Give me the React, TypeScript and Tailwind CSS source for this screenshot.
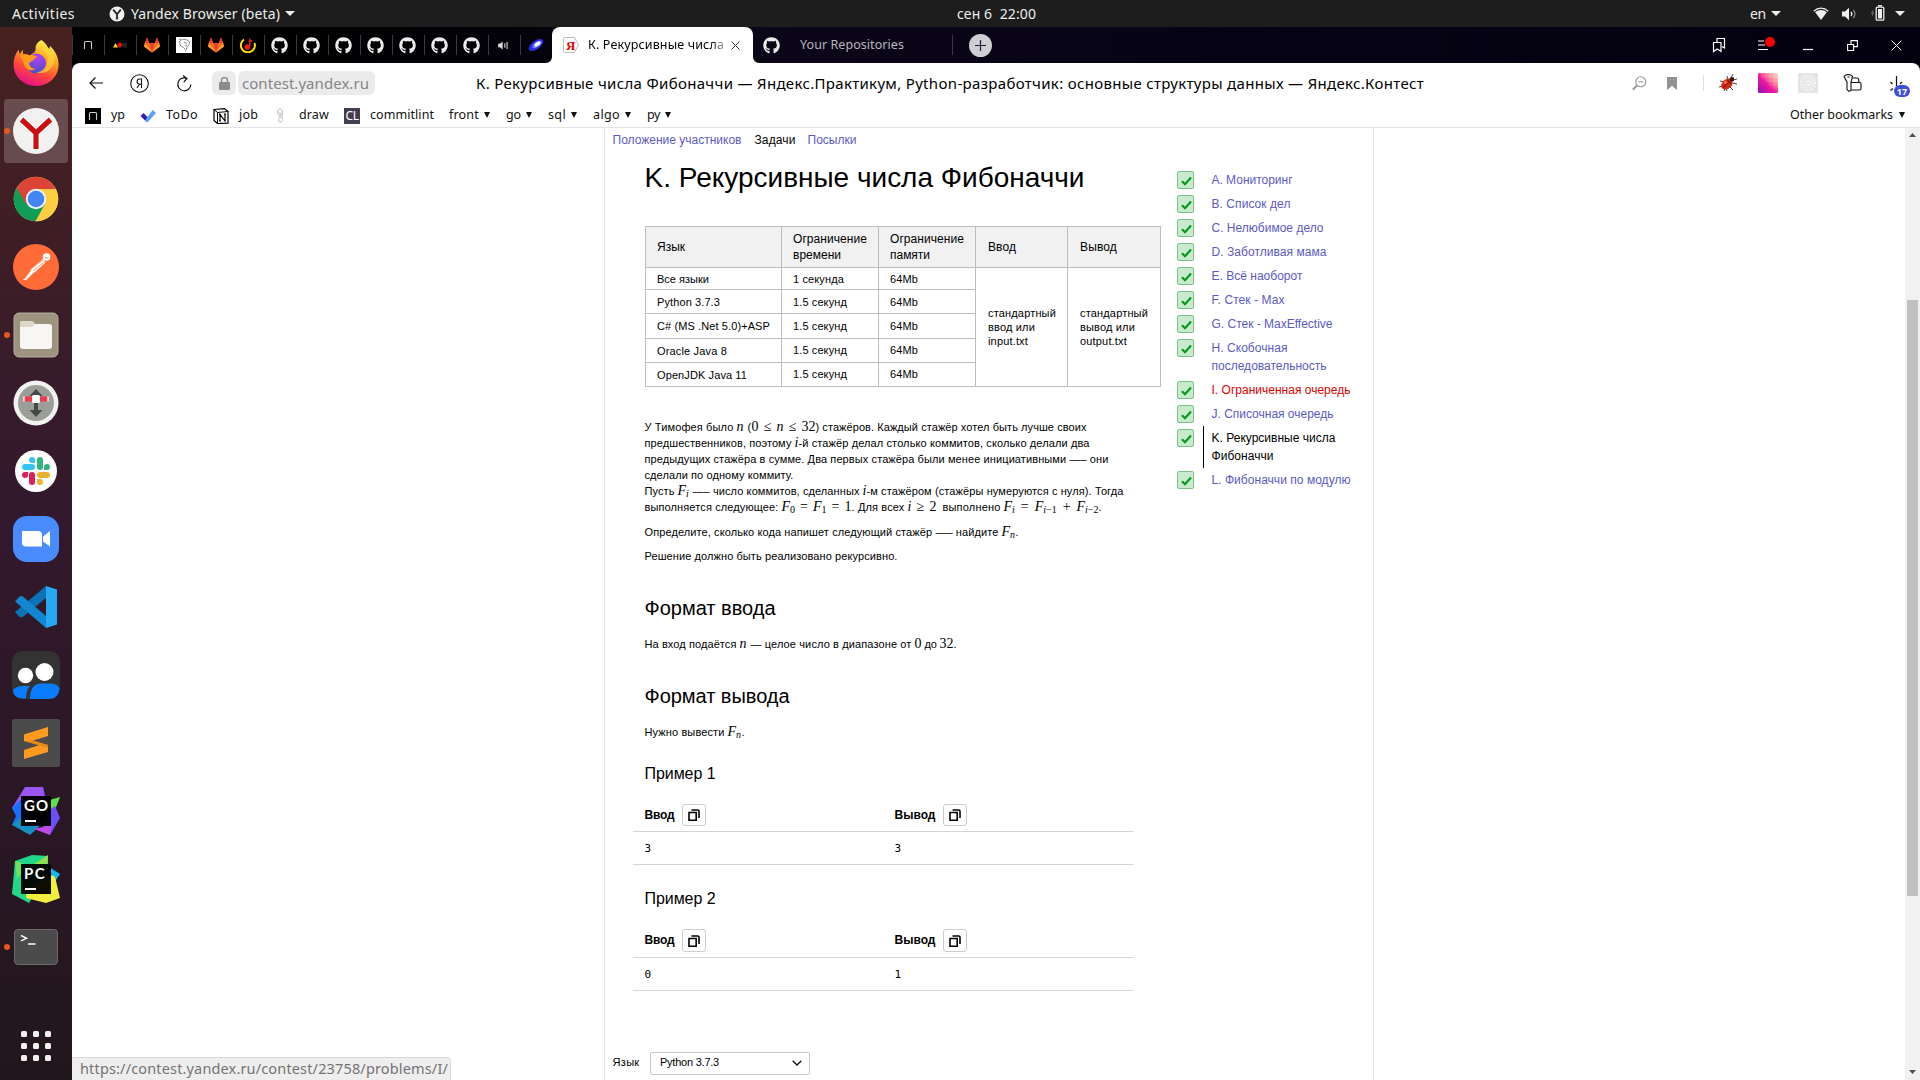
import React, { useLayoutEffect, useRef, useState } from "react";
import { FaGithub } from "react-icons/fa";

/* Text run whose letter (or word) spacing is adjusted so that it spans a given width. */
function Fit({ w, words = false, className = "", children }: { w: number; words?: boolean; className?: string; children: React.ReactNode }) {
  const ref = useRef<HTMLSpanElement>(null);
  const [spacing, setSpacing] = useState(0);
  useLayoutEffect(() => {
    const el = ref.current;
    if (!el) return;
    const text = el.textContent || "";
    const n = words ? text.split(" ").length - 1 : text.length > 1 ? text.length : 0;
    if (n > 0) setSpacing((w - el.getBoundingClientRect().width) / n);
  }, [w, words]);
  return (
    <span className={`inline-block shrink-0 whitespace-pre ${className}`} style={{ width: w }}>
      <span ref={ref} className="inline-block" style={words ? { wordSpacing: spacing } : { letterSpacing: spacing }}>
        {children}
      </span>
    </span>
  );
}

function Caret({ className = "" }: { className?: string }) {
  return (
    <svg className={`shrink-0 ${className}`} viewBox="0 0 10 6" preserveAspectRatio="none" fill="currentColor">
      <path d="M0 0h10L5 6z" />
    </svg>
  );
}

/* ---------- system bar ---------- */

function SystemBar() {
  return (
    <header className="relative flex h-[27px] shrink-0 items-center bg-[#1d1d1d] font-['Noto_Sans',sans-serif] text-[14px] leading-none text-[#eeeeec]">
      <Fit w={63} className="ml-3">Activities</Fit>
      <svg className="ml-[34px] size-[16px]" viewBox="0 0 16 16">
        <circle cx="8" cy="8" r="7.5" fill="#f2f2f2" />
        <path d="M4.2 3.6 8 8.2l3.8-4.6M8 8v5.6" stroke="#222" strokeWidth="1.8" fill="none" />
      </svg>
      <Fit w={149} className="ml-[6px]">Yandex Browser (beta)</Fit>
      <Caret className="ml-[5px] h-[5px] w-[10px]" />
      <div className="absolute left-[957px] top-0 flex h-full items-center">
        <Fit w={79}>сен 6  22:00</Fit>
      </div>
      <div className="ml-auto flex items-center pr-[15px]">
        <Fit w={16}>en</Fit>
        <Caret className="ml-[5px] h-[5px] w-[10px]" />
        <svg className="ml-[32px] h-[14px] w-[16px]" viewBox="0 0 16 14" fill="none">
          <path d="M.8 4.2C5 .2 11 .2 15.2 4.2" stroke="#eee" strokeWidth="1.2" />
          <path d="M2.2 5.2c3.5-2.8 8.1-2.8 11.6 0L8 13z" fill="#eee" />
        </svg>
        <svg className="ml-[13px] h-[14px] w-[15px]" viewBox="0 0 15 14" fill="none">
          <path d="M0 4.5h3L7 .8v12.4L3 9.5H0z" fill="#eee" />
          <path d="M9 5c1 1.200 1 2.800 0 4" stroke="#eee" strokeWidth="1.3" />
          <path d="M11.300 3c2 2.400 2 5.600 0 8" stroke="#888" strokeWidth="1.200" />
        </svg>
        <svg className="ml-[13px] -mt-px h-[16px] w-[15px]" viewBox="0 0 15 16" fill="none">
          <path d="M3.500 4 .8 8.500h1.700L1.500 12.500 4.200 7.500H2.500z" fill="#777" />
          <path d="M8 .8h4" stroke="#eee" strokeWidth="1.500" />
          <rect x="6.200" y="2.200" width="7.600" height="13" rx="1" stroke="#eee" strokeWidth="1.300" />
          <rect x="8" y="4" width="4" height="9.500" fill="#eee" />
        </svg>
        <Caret className="ml-[10px] h-[5px] w-[10px]" />
      </div>
    </header>
  );
}

/* ---------- dock ---------- */

const Firefox = () => (
  <svg viewBox="0 0 48 48" className="size-12">
    <defs>
      <linearGradient id="ff1" x1=".75" y1=".05" x2=".35" y2="1">
        <stop offset="0" stopColor="#fff44f" />
        <stop offset=".35" stopColor="#ffa020" />
        <stop offset=".65" stopColor="#ff4a3a" />
        <stop offset="1" stopColor="#e4108a" />
      </linearGradient>
      <radialGradient id="ff2" cx=".6" cy=".2" r=".8">
        <stop offset="0" stopColor="#b040f5" />
        <stop offset="1" stopColor="#4a4fc4" />
      </radialGradient>
    </defs>
    <path d="M29.500 1c3.500 2.300 5.500 5.500 7.500 9 .8-.8 1-2 .9-3.200C42.500 11 46.600 17.500 46.600 25.500 46.600 38 36.500 47 24 47S1.600 37.500 1.600 25.800c0-7 2.200-12 5.400-15.300-.2 2 .2 3.200.8 4.200L11 10.500v4.300c3 .2 5 .6 7 1.700 3-3.500 6.500-2 5.500-8.500C24.500 4.500 27 2 29.500 1z" fill="url(#ff1)" />
    <circle cx="24" cy="24.500" r="10" fill="url(#ff2)" />
    <path d="M18 16.200c3-.6 6 .2 7.500 1.800-3 .5-3 3.500-6 4.200-2.500.7-3 2.600-1.500 4.800 1 1.600 3 3 6 2.600-4 3.600-11.600 1.400-12.400-5.600L8 16z" fill="#ff9a1c" />
    <path d="M29 3c0 5 5.500 8 6.500 15 1 8-4 15-11.500 15.500 12 3 20-6 18-16C40.500 10 34 8 29 3z" fill="#ffd83a" opacity=".65" />
  </svg>
);

const YandexBrowser = () => (
  <svg viewBox="0 0 48 48" className="size-12">
    <circle cx="24" cy="24" r="23" fill="#f1f1f1" />
    <path d="M9.500 12.500 24 26l14.500-13.500M24 25v18" stroke="#fff" strokeWidth="8" fill="none" />
    <path d="M9.500 12.500 24 26l14.500-13.500M24 25v17" stroke="#cc0f12" strokeWidth="5.200" fill="none" />
  </svg>
);

const Chrome = () => (
  <svg viewBox="0 0 48 48" className="size-12">
    <circle cx="24" cy="24" r="22.300" fill="#fcd040" />
    <path d="M24 24 4.700 12.850A22.300 22.300 0 0 0 24 46.300L34 29z" fill="#0f9d58" />
    <path d="M4.700 12.850A22.300 22.300 0 0 1 43.800 14H24l-9.500 16z" fill="#db4437" />
    <path d="M24 14h19.800A22.300 22.300 0 0 1 23.500 46.300L33 29z" fill="#ffcd40" />
    <circle cx="24" cy="24" r="10.200" fill="#f1f1f1" />
    <circle cx="24" cy="24" r="8.300" fill="#4285f4" />
  </svg>
);

const Postman = () => (
  <svg viewBox="0 0 48 48" className="size-12">
    <circle cx="24" cy="24" r="23" fill="#ff6c37" />
    <circle cx="34.500" cy="14" r="3.800" fill="#fff" />
    <path d="M31.500 15.500 20 25l-1.500 2 4 2.500 11-10z" fill="#fff" />
    <path d="M19.500 26.500 13 35.500l-2.500 1.600 4-.3 8.500-8.300z" fill="#fff" />
    <path d="m19 26 12-9M21 28l12-9.500" stroke="#ff6c37" strokeWidth=".7" />
    <path d="m33 14.500 3.500.5" stroke="#ff6c37" strokeWidth=".8" />
  </svg>
);

const Files = () => (
  <svg viewBox="0 0 48 48" className="size-12">
    <rect x="2" y="2" width="44" height="44" rx="5" fill="#9c947f" stroke="#b5ae9c" />
    <path d="M8 12a2 2 0 0 1 2-2h10l4 4H40v4H8z" fill="#ddd8cc" />
    <rect x="8" y="13" width="32" height="25" rx="3" fill="#f7f6f4" />
    <path d="M8 12a2 2 0 0 1 2-2h9.500a2 2 0 0 1 1.500.7l3 2.600c-2 0-2.500 2.700-5 2.700H8z" fill="#ddd8cc" />
  </svg>
);

const Remote = () => (
  <svg viewBox="0 0 48 48" className="size-12">
    <circle cx="24" cy="24" r="22.500" fill="#f2f2f2" />
    <circle cx="24" cy="24" r="18" fill="#9c9f99" />
    <path d="m24 10 6.500 7H26v14h4.500L24 38l-6.500-7H22V17h-4.500z" fill="#464846" />
    <rect x="12" y="17.500" width="24" height="5" rx="1.500" fill="#f0384f" />
    <rect x="20" y="16" width="8" height="8" rx="1.500" fill="#fff" />
    <path d="M12 17.500v5M36 17.500v5" stroke="#fff" strokeWidth="1.200" />
  </svg>
);

const Slack = () => (
  <svg viewBox="0 0 48 48" className="size-12">
    <circle cx="24" cy="24" r="21" fill="#fff" />
    <g fill="#36c5f0">
      <rect x="10" y="17" width="13" height="6" rx="3" />
      <path d="M20 10a3 3 0 0 1 3 3v3h-3a3 3 0 0 1 0-6z" />
    </g>
    <g fill="#2eb67d">
      <rect x="25" y="10" width="6" height="13" rx="3" />
      <path d="M38 20a3 3 0 0 1-3 3h-3v-3a3 3 0 0 1 6 0z" />
    </g>
    <g fill="#ecb22e">
      <rect x="25" y="25" width="13" height="6" rx="3" />
      <path d="M28 38a3 3 0 0 1-3-3v-3h3a3 3 0 0 1 0 6z" />
    </g>
    <g fill="#e01e5a">
      <rect x="17" y="25" width="6" height="13" rx="3" />
      <path d="M10 28a3 3 0 0 1 3-3h3v3a3 3 0 0 1-6 0z" />
    </g>
  </svg>
);

const Zoom = () => (
  <svg viewBox="0 0 48 48" className="size-12">
    <rect x="1" y="1" width="46" height="46" rx="14" fill="#4a8cff" />
    <path d="M10 16h16a4 4 0 0 1 4 4v11.500H14a4 4 0 0 1-4-4z" fill="#fff" />
    <path d="M31 21.500 38 16v15.500L31 26.500z" fill="#fff" />
  </svg>
);

const VsCode = () => (
  <svg viewBox="0 0 48 48" className="size-12">
    <path d="m3 29 4.500 5 3 .3L34 15V3z" fill="#0b72b5" />
    <path d="m3 18.500 4.500-5 3-.3L34 33v12z" fill="#1287cf" />
    <path d="M34 3 45 6.500v35L34 45z" fill="#27a9f2" />
  </svg>
);

const People = () => (
  <svg viewBox="0 0 48 48" className="size-12">
    <rect width="48" height="48" rx="11" fill="#333" />
    <path d="M1 39c3-3.500 6-4 9-4h8c-3 3-4 8-4 12.500H11C5 47.500 1 44 1 39z" fill="#0a7cff" />
    <path d="M18 48c0-10 4-15.500 11-15.500h9c5 0 8 1.500 9.500 5C47 44 43 48 37 48z" fill="#0a7cff" />
    <circle cx="13.500" cy="24.500" r="7.700" fill="#fff" />
    <circle cx="32.500" cy="21" r="9" fill="#fff" />
  </svg>
);

const Sublime = () => (
  <svg viewBox="0 0 48 48" className="size-12">
    <rect width="48" height="48" rx="2" fill="#4b4b4b" />
    <path d="M12 15.500 36 8v9L21 21.500 36 26v7L12 40v-9l15-4.700L12 22z" fill="#ff9a1f" />
    <path d="m21 21.500 15 4.500v2.500L27 26.300 12 22z" fill="#d97a10" opacity=".6" />
  </svg>
);

function JetBrains({ label, children }: { label: string; children: React.ReactNode }) {
  return (
    <div className="relative size-12">
      <svg viewBox="0 0 48 48" className="size-12">{children}</svg>
      <div className="absolute left-[9px] top-[9px] size-[30px] bg-black/95 font-['Lato',sans-serif] text-[15px] font-bold leading-none text-white">
        <Fit w={label === "GO" ? 25 : 22} className="ml-[3px] mt-[2px]">{label}</Fit>
        <div className="absolute bottom-[4px] left-1 h-[2px] w-[11px] bg-white" />
      </div>
    </div>
  );
}

const GoLand = () => (
  <JetBrains label="GO">
    <path d="M13 0h18l2 9-9 10L0 21z" fill="#9b55f5" />
    <path d="m0 21 9-9 8 30L0 38l4-9z" fill="#1470ff" />
    <path d="m0 38 9-8 20 8-11 10z" fill="#158ec0" />
    <path d="m31 15 17-5-7 18z" fill="#5fe04c" />
    <path d="m39 22 4-3 5 12-10 17-8-10z" fill="#6c50fa" />
    <path d="m22 42 18-4-2 10z" fill="#c04ae8" />
  </JetBrains>
);

const PyCharm = () => (
  <JetBrains label="PC">
    <path d="M3 6 20 0l16 1v15L17 48 0 39z" fill="#21d789" />
    <path d="m36 0-1 13-14-3z" fill="#8fe04a" />
    <path d="m37 12 11 7-6 9z" fill="#12b9f0" />
    <path d="m40 20 3 2 5 21-14 5-20-5 1-10z" fill="#f2ee3e" />
    <path d="m3 6 13 4L5 24z" fill="#6be35f" />
  </JetBrains>
);

const Terminal = () => (
  <div className="flex h-9 w-11 rounded-[4px] border border-[#6b6b6b] bg-[#4b4b4b]">
    <svg viewBox="0 0 20 16" className="ml-[5px] mt-[3px] h-4 w-5" fill="none" stroke="#fff" strokeWidth="1.400">
      <path d="m1 2.500 5.500 2.700L1 8M8 11h7.500" />
    </svg>
  </div>
);

const dock: { Icon: () => React.ReactElement; running?: boolean; active?: boolean }[] = [
  { Icon: Firefox },
  { Icon: YandexBrowser, running: true, active: true },
  { Icon: Chrome },
  { Icon: Postman },
  { Icon: Files, running: true },
  { Icon: Remote },
  { Icon: Slack },
  { Icon: Zoom },
  { Icon: VsCode },
  { Icon: People },
  { Icon: Sublime },
  { Icon: GoLand },
  { Icon: PyCharm },
  { Icon: Terminal, running: true },
];

function Dock() {
  return (
    <aside className="flex w-[72px] shrink-0 flex-col bg-linear-to-b from-[#47211f] via-[#33192d] via-45% to-[#22161d] pt-[2px]">
      {dock.map(({ Icon, running, active }, i) => (
        <div key={i} className="relative -mt-px mb-px flex h-[68px] shrink-0 items-center justify-center first:mt-[-1px]">
          <div className={`mt-[2px] flex size-16 items-center justify-center rounded-[4px] ${active ? "bg-white/20" : ""}`}>
            <Icon />
          </div>
          {running && <i className="absolute left-[4px] top-[32px] size-[6px] rounded-full bg-[#e95420]" />}
        </div>
      ))}
      <div className="mx-auto mt-[50px] grid grid-cols-3 gap-[6px]">
        {Array.from({ length: 9 }, (_, i) => (
          <i key={i} className="size-[6px] rounded-[1.500px] bg-[#f2f0ee]" />
        ))}
      </div>
    </aside>
  );
}

/* ---------- tabs ---------- */

const YpMark = () => (
  <svg viewBox="0 0 16 16" className="size-4">
    <rect width="16" height="16" fill="#000" />
    <path d="M4.500 12V5.500a1 1 0 0 1 1-1h5a1 1 0 0 1 1 1V12" fill="none" stroke="#ccc" strokeWidth="1.100" />
  </svg>
);
const Shapes = () => (
  <svg viewBox="0 0 16 16" className="size-4">
    <path d="M1 10.500 3.500 6 6 10.500z" fill="#ffd800" />
    <path d="m8 5 3 3-3 3-3-3z" fill="#e01010" />
    <rect x="10" y="6" width="5" height="4.500" fill="#222" />
  </svg>
);
const GitLab = () => (
  <svg viewBox="0 0 16 16" className="size-4">
    <path d="M8 15.500 0 9.500l1-4L3 .5l2.200 5.500h5.600L13 .5l2 5 1 4z" fill="#fc6d26" />
    <path d="M8 15.500 5.200 6h5.600z" fill="#e24329" />
    <path d="M3 .5 5.200 6H1zM13 .5 10.800 6H15z" fill="#e24329" />
    <path d="M0 9.500 1 6l7 9.500zM16 9.500 15 6l-7 9.500z" fill="#fca326" />
  </svg>
);
const Sketch = () => (
  <svg viewBox="0 0 16 16" className="size-4">
    <rect width="16" height="16" fill="#fff" />
    <path d="M3 5c2-3 5-3 8-2s3 4 1 6-1 4-3 5M4 8c1 2 3 1 5 4M3 4c1 1 1 2 1 4M8 5.500l3 1M9 9l2-1M3 2l2 1" fill="none" stroke="#777" strokeWidth=".9" />
  </svg>
);
const Music = () => (
  <svg viewBox="0 0 16 16" className="size-4">
    <path d="M4 2.500A7 7 0 1 0 14.500 6" fill="none" stroke="#ffe000" strokeWidth="2" />
    <circle cx="7.300" cy="10" r="2.800" fill="#f01818" />
    <path d="M9 10V1l4 3.500-2.500.5v5z" fill="#f01818" />
  </svg>
);
const Octocat = () => <FaGithub className="size-[17px] text-[#ececec]" />;
const Speaker = () => (
  <svg viewBox="0 0 12 10" className="h-[9px] w-[11px]" fill="none">
    <path d="M0 3h2l3-2.500v9L2 7H0z" fill="#ddd" />
    <path d="M7.500 2.500v5M10 1v8" stroke="#ddd" strokeWidth="1.200" />
  </svg>
);
const Comet = () => (
  <svg viewBox="0 0 16 16" className="size-4">
    <ellipse cx="8" cy="8" rx="8.500" ry="4.200" transform="rotate(-36 8 8)" fill="#2a2ae0" />
    <ellipse cx="9" cy="7.500" rx="5.500" ry="2.600" transform="rotate(-36 9 7.500)" fill="#6f80ff" />
    <ellipse cx="9.500" cy="7" rx="3.400" ry="1.800" transform="rotate(-36 9.500 7)" fill="#fff" />
  </svg>
);

const pinned = [YpMark, Shapes, GitLab, Sketch, GitLab, Music, Octocat, Octocat, Octocat, Octocat, Octocat, Octocat, Octocat, Speaker, Comet];

function TabStrip() {
  return (
    <div className="flex h-9 shrink-0 bg-linear-to-r from-black via-[#0b0618] via-35% to-[#030110] text-[12.500px]">
      {pinned.map((Icon, i) => (
        <div key={i} className="flex w-8 shrink-0 items-center">
          <i className="h-5 w-px bg-[#3a3a40]" />
          <div className="flex flex-1 justify-center pr-[2px]">
            <Icon />
          </div>
        </div>
      ))}
      <div className="relative flex w-[201px] shrink-0 items-center rounded-t-[8px] bg-white text-black">
        <svg className="absolute -left-[6px] bottom-0 size-[6px]" viewBox="0 0 6 6"><path d="M6 0v6H0a6 6 0 0 0 6-6z" fill="#fff" /></svg>
        <svg className="absolute -right-[6px] bottom-0 size-[6px]" viewBox="0 0 6 6"><path d="M0 0v6h6a6 6 0 0 1-6-6z" fill="#fff" /></svg>
        <svg className="ml-[11px] h-4 w-4" viewBox="0 0 16 16">
          <path d="M.5 1.500a1 1 0 0 1 1-1h10L15.500 8l-4 7.500h-10a1 1 0 0 1-1-1z" fill="#fff" stroke="#bbb" />
        </svg>
        <span className="absolute left-[14px] top-[12px] font-['Liberation_Serif',serif] text-[13px] font-bold leading-none text-[#e00]">Я</span>
        <Fit w={136} className="ml-[9px] mt-px overflow-hidden mask-r-from-90% mask-r-to-105%">К. Рекурсивные числа</Fit>
        <svg className="ml-[7px] size-[9px]" viewBox="0 0 9 9"><path d="m.5.5 8 8m0-8-8 8" stroke="#333" strokeWidth="1" /></svg>
      </div>
      <div className="flex items-center pl-[10px] text-[#b9b7c0]">
        <Octocat />
        <Fit w={104} className="ml-5 mt-px">Your Repositories</Fit>
        <i className="ml-[48px] h-5 w-px bg-[#3a3744]" />
        <svg className="ml-4 size-[23px]" viewBox="0 0 23 23">
          <circle cx="11.500" cy="11.500" r="11.500" fill="#cfced2" />
          <path d="M11.500 6v11M6 11.500h11" stroke="#1c1c3a" strokeWidth="1.200" />
        </svg>
      </div>
      <div className="ml-auto flex items-center pr-[18px]">
        <svg className="size-4" viewBox="0 0 16 16" fill="none" stroke="#fff" strokeWidth="1.200">
          <path d="M2.500 5.500h7.500v9L6.200 12 2.500 14.500z" />
          <path d="M6 5V1.500H13.500V11L11 9.500" />
        </svg>
        <svg className="ml-[31px] h-4 w-[18px]" viewBox="0 0 18 16" fill="none">
          <path d="M0 4h6M0 8h7M0 12.500h10" stroke="#fff" strokeWidth="1.200" />
          <circle cx="12" cy="5" r="5" fill="red" />
        </svg>
        <svg className="ml-[27px] h-4 w-[10px]" viewBox="0 0 10 16"><path d="M0 12.500h10" stroke="#fff" strokeWidth="1.200" /></svg>
        <svg className="ml-[34px] size-[11px]" viewBox="0 0 11 11" fill="none" stroke="#fff" strokeWidth="1.100">
          <path d="M.6 4.500h6v6h-6zM4 4V.6h6.400v6H7" />
        </svg>
        <svg className="ml-[33px] size-[11px]" viewBox="0 0 11 11"><path d="m.6.6 9.800 9.800m0-9.800L.6 10.400" stroke="#fff" strokeWidth="1" /></svg>
      </div>
    </div>
  );
}

/* ---------- address bar ---------- */

function AddressBar() {
  return (
    <div className="flex h-[39px] shrink-0 items-center rounded-t-[8px] bg-white pt-px">
      <svg className="ml-[17px] h-3 w-[14px]" viewBox="0 0 14 12" fill="none" stroke="#111" strokeWidth="1.200">
        <path d="M14 6H1M6.500.5 1 6l5.500 5.500" />
      </svg>
      <svg className="ml-[27px] size-[19px]" viewBox="0 0 19 19" fill="none" stroke="#111" strokeWidth="1.100">
        <circle cx="9.500" cy="9.500" r="8.800" />
        <path d="M11.500 14V5H9.700a2.600 2.600 0 0 0 0 5.200h1.800M9.500 10.200 7 14" />
      </svg>
      <svg className="ml-[27px] size-[17px]" viewBox="0 0 17 17" fill="none" stroke="#111" strokeWidth="1.200">
        <path d="M14.800 9.500A6.500 6.500 0 1 1 10.500 3.200M7 .5l4 3-3.300 3.600" />
      </svg>
      <div className="ml-[19px] flex h-6 w-6 items-center justify-center rounded-[6px] bg-[#ebebeb]">
        <svg className="h-[13px] w-[11px]" viewBox="0 0 11 13">
          <path d="M2.500 6V3.500a3 3 0 0 1 6 0V6" fill="none" stroke="#8c8c8c" strokeWidth="1.500" />
          <rect y="5" width="11" height="8" rx="1" fill="#8c8c8c" />
        </svg>
      </div>
      <div className="ml-[2px] flex h-6 w-[137px] items-center rounded-[6px] bg-[#ebebeb] pl-1 text-[15px] leading-none text-[#868686]">
        <Fit w={127}>contest.yandex.ru</Fit>
      </div>
      <Fit w={948} className="ml-[101px] text-[15px] leading-none text-black">
        К. Рекурсивные числа Фибоначчи — Яндекс.Практикум, Python-разработчик: основные структуры данных — Яндекс.Контест
      </Fit>
      <svg className="ml-auto size-[15px]" viewBox="0 0 15 15" fill="none" stroke="#929292">
        <circle cx="8.800" cy="5.800" r="5" strokeWidth="1.100" />
        <path d="M6.300 5.800h5" strokeWidth="1.100" />
        <path d="M4.800 9.800.8 13.600" strokeWidth="2" />
      </svg>
      <svg className="ml-5 h-[13px] w-[10px]" viewBox="0 0 10 13"><path d="M0 0h10v13L5 9l-5 4z" fill="#929292" /></svg>
      <i className="ml-[26px] h-4 w-px bg-[#ddd]" />
      <svg className="ml-[14px] size-5" viewBox="0 0 20 20">
        <path d="M2 8l4 1M1 14l4-1M9 18l-1-4M9 3l1 4M13 5l2-4M15 7l4-1M15 10l4 1M12 14l3 3M6 18l1-3" stroke="#444" strokeWidth="1" fill="none" />
        <ellipse cx="9" cy="11" rx="6.500" ry="4.700" transform="rotate(-42 9 11)" fill="#d42a12" />
        <path d="M5 15 13 7M9.500 7 13 11" stroke="#511" strokeWidth=".9" />
        <circle cx="14" cy="6.200" r="2.300" fill="#3a1510" />
        <circle cx="7.500" cy="9.500" r="1.400" fill="#ff7a50" />
      </svg>
      <svg className="ml-[20px] size-5" viewBox="0 0 20 20">
        <defs>
          <linearGradient id="px" x1="0" y1="1" x2="1" y2="0">
            <stop offset="0" stopColor="#8a10b8" />
            <stop offset=".45" stopColor="#f018a0" />
            <stop offset=".7" stopColor="#ff8a98" />
            <stop offset="1" stopColor="#ffe4d0" />
          </linearGradient>
        </defs>
        <rect width="20" height="20" rx="1" fill="url(#px)" />
        <path d="M4 0v4M8 0v8M12 0v12M16 0v16M4 4h16M8 8h12M12 12h8" stroke="#fff" strokeOpacity=".3" strokeWidth=".5" />
      </svg>
      <svg className="ml-[20px] size-5" viewBox="0 0 20 20" fill="none">
        <rect width="20" height="20" rx="1" fill="#e4e4e4" />
        <g stroke="#fafafa" strokeWidth="1.200">
          <circle cx="10" cy="10" r="7.500" strokeDasharray="2 1" />
          <circle cx="10" cy="10" r="5" strokeDasharray="1.500 1" />
          <circle cx="10" cy="10" r="2.200" />
        </g>
      </svg>
      <svg className="ml-[25px] h-[18px] w-[19px]" viewBox="0 0 19 18" fill="none" stroke="#111" strokeWidth="1.100">
        <path d="M1 2.500C3-.2 7.500-.2 9.500 2.500L8 8v8.500l-2 .8-2-1.800V8z" />
        <path d="M9.500 4h4.300a2 2 0 0 1 2 2v2M8 8.500h8.500a1.500 1.500 0 0 1 1.500 1.500v4.500a1.500 1.500 0 0 1-1.500 1.500H8" />
        <path d="M4.500 3h2" />
      </svg>
      <div className="relative ml-[27px] mr-[9px] h-5 w-[22px]">
        <svg className="absolute left-0 top-[3px] size-4" viewBox="0 0 16 16" fill="none" stroke="#111" strokeWidth="1.200">
          <path d="M7.500 0v10M1.500 6l2 2M1.500 14.500l2.500-2M13 6l-2 2" />
        </svg>
        <div className="absolute left-[5px] top-[12px] flex h-3 w-4 items-center justify-center rounded-full bg-[#3f4fdc] text-[9px] font-bold leading-none text-white">17</div>
      </div>
    </div>
  );
}

/* ---------- bookmarks ---------- */

const folders: [string, number, string][] = [
  ["front", 30, "ml-[15px]"],
  ["go", 15, "ml-[16px]"],
  ["sql", 18, "ml-[16px]"],
  ["algo", 27, "ml-[16px]"],
  ["py", 13, "ml-[16px]"],
];

function Bookmarks() {
  return (
    <div className="flex h-[26px] shrink-0 items-center border-b border-[#e3e3e3] bg-white pt-[2px] text-[12.500px] leading-none text-[#111]">
      <span className="ml-[13px]"><YpMark /></span>
      <Fit w={14} className="ml-[10px]">yp</Fit>
      <svg className="ml-[15px] size-4" viewBox="0 0 16 16">
        <path d="m.5 8 3-3L8 9.500 5.500 13z" fill="#3818b8" />
        <path d="M12.500 2 16 5 8.300 13.500a2 2 0 0 1-2.800 0L5 12.500z" fill="#5aa0f8" />
      </svg>
      <Fit w={32} className="ml-[10px]">ToDo</Fit>
      <svg className="ml-[15px] h-4 w-4" viewBox="0 0 16 16">
        <path d="M1 1.500 11.500.7l3.500 2.500v12l-10.500.3L1 12.500z" fill="#fff" stroke="#000" strokeWidth="1.200" />
        <path d="M1 1.500l3.500 3L15 3.500M4.500 4.500v11" fill="none" stroke="#000" />
        <path d="M7 13V6.500l5 6.500V6M6 6.500h2M11 6h2M6 13h2" fill="none" stroke="#000" strokeWidth="1.200" />
      </svg>
      <Fit w={19} className="ml-[10px]">job</Fit>
      <svg className="ml-[18px] h-4 w-[9px]" viewBox="0 0 9 16" fill="none" stroke="#bbb">
        <ellipse cx="4" cy="4" rx="2.500" ry="3.300" />
        <path d="M3 5c3 0 4 2 3 4M2.500 9c2-1 4 0 4 2.500S3 15 2.500 13s1-3 2-2.500" />
      </svg>
      <Fit w={30} className="ml-[14px]">draw</Fit>
      <div className="ml-[15px] flex size-4 items-center justify-center bg-[#463c50] text-[12px] text-white">
        <Fit w={13}>CL</Fit>
      </div>
      <Fit w={64} className="ml-[10px]">commitlint</Fit>
      {folders.map(([name, w, gap]) => (
        <span key={name} className={`flex items-center ${gap}`}>
          <Fit w={w}>{name}</Fit>
          <Caret className="ml-[5px] -mt-px h-[6px] w-[6px]" />
        </span>
      ))}
      <Fit w={103} className="ml-auto -mt-px">Other bookmarks</Fit>
      <Caret className="ml-[6px] -mt-[2px] mr-[15px] h-[6px] w-[6px]" />
    </div>
  );
}

/* ---------- problem page ---------- */

const rows = [
  ["Все языки", 52, "1 секунда", 51, "h-[22px]"],
  ["Python 3.7.3", 63, "1.5 секунд", 54, "h-6"],
  ["C# (MS .Net 5.0)+ASP", 113, "1.5 секунд", 54, "h-[25px]"],
  ["Oracle Java 8", 70, "1.5 секунд", 54, "h-6"],
  ["OpenJDK Java 11", 90, "1.5 секунд", 54, "h-6"],
] as const;

const th = "flex flex-col justify-center border-r border-[#bdbdbd] bg-[#f1f1f1] pl-[11px]";
const tall = "flex flex-col justify-center border-r border-[#bdbdbd] pl-[12px] leading-[14px]";

function Limits() {
  return (
    <div className="mt-[32px] ml-10 w-[516px] border-l border-t border-[#bdbdbd] text-[11px]">
      <div className="grid h-[41px] grid-cols-[136px_97px_97px_92px_93px] border-b border-[#bdbdbd] text-[12px] leading-4">
        <div className={th}><Fit w={28}>Язык</Fit></div>
        <div className={th}><Fit w={74}>Ограничение</Fit><Fit w={48}>времени</Fit></div>
        <div className={th}><Fit w={74}>Ограничение</Fit><Fit w={40}>памяти</Fit></div>
        <div className={th}><Fit w={28} className="ml-px">Ввод</Fit></div>
        <div className={th}><Fit w={37} className="ml-px">Вывод</Fit></div>
      </div>
      <div className="grid grid-cols-[330px_92px_93px] border-b border-[#bdbdbd]">
        <div className="-mb-px">
          {rows.map(([lang, lw, time, tw, h], r) => (
            <div key={lang} className={`grid grid-cols-[136px_97px_97px] border-b border-[#bdbdbd] leading-[14px] ${h}`}>
              {[[lang, lw], [time, tw], ["64Mb", 28]].map(([t, w], i) => (
                <div key={i} className={`flex items-center border-r border-[#bdbdbd] pl-[11px] ${i > 0 && r > 2 ? "pb-[2px]" : ""}`}>
                  <Fit w={w as number}>{t}</Fit>
                </div>
              ))}
            </div>
          ))}
        </div>
        <div className={tall}><Fit w={68}>стандартный</Fit><Fit w={47}>ввод или</Fit><Fit w={40}>input.txt</Fit></div>
        <div className={tall}><Fit w={68}>стандартный</Fit><Fit w={55}>вывод или</Fit><Fit w={47}>output.txt</Fit></div>
      </div>
    </div>
  );
}

/* Inline formula: variables are italic, indices are subscripts. */
function M({ w, gap = 3, children }: { w: number; gap?: number; children: React.ReactNode }) {
  return (
    <span className="inline-block" style={{ marginLeft: gap }}>
      <Fit w={w} words className="font-['Liberation_Serif',serif] text-[14px] leading-none [&_sub]:bottom-[-2px] [&_sub]:text-[10px]">{children}</Fit>
    </span>
  );
}
function W({ w, gap = 0, children }: { w: number; gap?: number; children: React.ReactNode }) {
  return (
    <span className="inline-block" style={{ marginLeft: gap }}>
      <Fit w={w}>{children}</Fit>
    </span>
  );
}
const Row = ({ children }: { children: React.ReactNode }) => <div className="flex h-4 items-baseline leading-4">{children}</div>;
const F = ({ s }: { s: React.ReactNode }) => <><i>F</i><sub>{s}</sub></>;

function Statement() {
  return (
    <div className="ml-[39.500px] text-[11px]">
      <div className="mt-8">
        <Row>
          <W w={89}>У Тимофея было</W><M w={8}><i>n</i></M><W w={4} gap={3}>(</W>
          <M w={64} gap={0}>0 ≤ <i>n</i> ≤ 32</M><W w={271}>) стажёров. Каждый стажёр хотел быть лучше своих</W>
        </Row>
        <Row>
          <W w={147}>предшественников, поэтому</W><M w={4}><i>i</i></M><W w={291}>-й стажёр делал столько коммитов, сколько делали два</W>
        </Row>
        <Row><W w={464}>предыдущих стажёра в сумме. Два первых стажёра были менее инициативными —– они</W></Row>
        <Row><W w={149}>сделали по одному коммиту.</W></Row>
        <Row>
          <W w={30}>Пусть</W><M w={12}><F s={<i>i</i>} /></M><W w={167} gap={3}>—– число коммитов, сделанных</W><M w={4}><i>i</i></M>
          <W w={257}>-м стажёром (стажёры нумеруются с нуля). Тогда</W>
        </Row>
        <Row>
          <W w={134}>выполняется следующее:</W><M w={70} gap={3}><F s="0" /> = <F s="1" /> = 1</M><W w={53}>. Для всех</W>
          <M w={29}><i>i</i> ≥ 2</M><W w={58} gap={6}>выполнено</W>
          <M w={95}><F s={<i>i</i>} /> = <F s={<><i>i</i>−1</>} /> + <F s={<><i>i</i>−2</>} /></M><W w={3}>.</W>
        </Row>
      </div>
      <div className="mt-[9px]"><Row><W w={354}>Определите, сколько кода напишет следующий стажёр —– найдите</W><M w={14}><F s={<i>n</i>} /></M><W w={3}>.</W></Row></div>
      <div className="mt-2"><Row><W w={253}>Решение должно быть реализовано рекурсивно.</W></Row></div>
      <h2 className="mt-8 h-6 text-[20px] leading-6"><Fit w={131}>Формат ввода</Fit></h2>
      <div className="mt-4">
        <Row>
          <W w={92}>На вход подаётся</W><M w={8}><i>n</i></M><W w={161} gap={3}>— целое число в диапазоне от</W><M w={7}>0</M>
          <W w={12} gap={3}>до</W><M w={14}>32</M><W w={3}>.</W>
        </Row>
      </div>
      <h2 className="mt-8 h-6 text-[20px] leading-6"><Fit w={145}>Формат вывода</Fit></h2>
      <div className="mt-4"><Row><W w={80}>Нужно вывести</W><M w={14}><F s={<i>n</i>} /></M><W w={3}>.</W></Row></div>
    </div>
  );
}

function CopyButton() {
  return (
    <span className="ml-[7px] flex h-full w-6 items-center justify-center rounded-[3px] border border-[#ccc] bg-white">
      <svg className="size-3" viewBox="0 0 12 12" fill="none" stroke="#000" strokeWidth="1.600">
        <path d="M1 3.500h7.200v7.700H1z" />
        <path d="M3.500 1h6.200a1.300 1.300 0 0 1 1.300 1.300V9" />
      </svg>
    </span>
  );
}

function Example({ n, input, output, h }: { n: number; input: string; output: string; h: string }) {
  return (
    <section className="mt-6 ml-[28px] w-[500px]">
      <h3 className="ml-[11.500px] h-5 text-[16px] leading-5"><Fit w={71}>{`Пример ${n}`}</Fit></h3>
      <div className={`mt-5 mb-[5px] flex text-[12px] font-bold leading-[22px] ${h}`}>
        <div className="flex w-[250px] pl-[11.500px]"><Fit w={30}>Ввод</Fit><CopyButton /></div>
        <div className="flex pl-[11.500px]"><Fit w={41}>Вывод</Fit><CopyButton /></div>
      </div>
      <div className="flex h-[34px] items-center border-y border-[#d5d5d5] pt-[2px] font-['DejaVu_Sans_Mono',monospace] text-[11px]">
        <span className="w-[250px] pl-[11.500px]">{input}</span>
        <span className="pl-[11.500px]">{output}</span>
      </div>
    </section>
  );
}

const problems: [string, number, string?, number?][] = [
  ["A. Мониторинг", 81],
  ["B. Список дел", 79],
  ["C. Нелюбимое дело", 112],
  ["D. Заботливая мама", 115],
  ["E. Всё наоборот", 91],
  ["F. Стек - Max", 73],
  ["G. Стек - MaxEffective", 121],
  ["H. Скобочная", 76, "последовательность", 115],
  ["I. Ограниченная очередь", 139],
  ["J. Списочная очередь", 122],
  ["K. Рекурсивные числа", 124, "Фибоначчи", 62],
  ["L. Фибоначчи по модулю", 139],
];

function ProblemList() {
  return (
    <ul className="mt-4 flex flex-col text-[12px] leading-[18px]">
      {problems.map(([a, aw, b, bw]) => {
        const color = a[0] === "I" ? "text-[#e00000]" : a[0] === "K" ? "text-black" : "text-[#5a5ac4]";
        return (
          <li key={a} className="flex">
            <span className="mt-[3px] flex h-[18px] w-[17px] shrink-0 items-center justify-center rounded-[2px] border border-[#7fbf88] bg-[#c9ebcd]">
              <svg className="mt-[2px] ml-px h-[10px] w-[11px]" viewBox="0 0 11 10"><path d="m1 5.200 3 3L10 1.500" fill="none" stroke="#0b9a1e" strokeWidth="2.300" /></svg>
            </span>
            <span className={`ml-[9px] border-l pt-[3px] pb-[3px] pl-[7.500px] ${color} ${a[0] === "K" ? "border-black" : "border-transparent"}`}>
              <span className="block h-[18px]"><Fit w={aw}>{a}</Fit></span>
              {b && <span className="block h-[18px]"><Fit w={bw as number}>{b}</Fit></span>}
            </span>
          </li>
        );
      })}
    </ul>
  );
}

function Page() {
  return (
    <div className="relative flex min-h-0 flex-1 bg-white font-['Liberation_Sans',Arial,sans-serif] text-black">
      <main className="ml-[532px] w-[770px] shrink-0 border-x border-[#e3e3e3]">
        <nav className="flex h-6 items-center pl-[7.500px] text-[12px] leading-6 text-[#5a5ac4]">
          <Fit w={129}>Положение участников</Fit>
          <Fit w={41} className="ml-[13px] text-black">Задачи</Fit>
          <Fit w={49} className="ml-[12px]">Посылки</Fit>
        </nav>
        <div className="flex">
          <article className="w-[572px] shrink-0">
            <h1 className="mt-[10px] ml-[39.500px] h-8 text-[28px] leading-8"><Fit w={440}>K. Рекурсивные числа Фибоначчи</Fit></h1>
            <Limits />
            <Statement />
            <Example n={1} input="3" output="3" h="h-[22px]" />
            <Example n={2} input="0" output="1" h="h-[23px]" />
          </article>
          <ProblemList />
        </div>
        <div className="mt-[61px] flex h-[22px] items-center pl-[7.500px] text-[11px]">
          <Fit w={27} className="-mt-px">Язык</Fit>
          <div className="ml-[10.500px] flex h-[23px] w-40 items-center rounded-[2px] border border-[#c8c8c8] pl-[9px]">
            <Fit w={59} className="-mt-px">Python 3.7.3</Fit>
            <svg className="ml-auto mr-[7px] h-[6px] w-[10px]" viewBox="0 0 10 6"><path d="m.7.7 4.300 4.300L9.300.7" fill="none" stroke="#111" strokeWidth="1.300" /></svg>
          </div>
        </div>
      </main>
      <div className="ml-auto flex w-[15px] flex-col items-center bg-[#f1f1f1] text-[#505050]">
        <Caret className="mt-[5px] h-1 w-[7px] rotate-180" />
        <div className="mt-[163px] h-[596px] w-[11px] bg-[#c1c1c1]" />
        <Caret className="mt-auto mb-[6px] h-1 w-[7px]" />
      </div>
      <div className="absolute bottom-0 left-0 flex h-[23px] w-[379px] items-center rounded-tr-[4px] border-r border-t border-[#d8d8d8] bg-[#eeeeee] pb-px pl-2 font-['Noto_Sans',sans-serif] text-[14.500px] leading-none text-[#747474]">
        <Fit w={368}>https://contest.yandex.ru/contest/23758/problems/I/</Fit>
      </div>
    </div>
  );
}

export default function App() {
  return (
    <div className="flex h-[1080px] w-[1920px] flex-col overflow-hidden bg-black">
      <SystemBar />
      <div className="flex min-h-0 flex-1">
        <Dock />
        <div className="flex min-w-0 flex-1 flex-col bg-[#030110] font-['Noto_Sans',sans-serif]">
          <TabStrip />
          <AddressBar />
          <Bookmarks />
          <Page />
        </div>
      </div>
    </div>
  );
}
